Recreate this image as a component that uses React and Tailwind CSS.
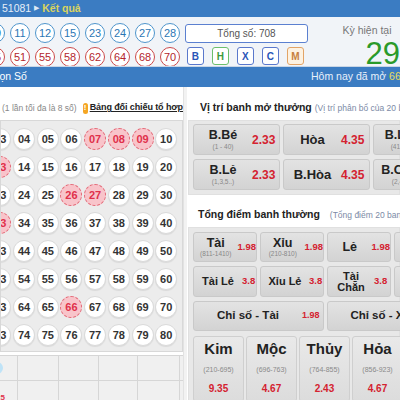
import React from 'react';

const FONT = "font-['Liberation_Sans',Arial,sans-serif]";

const topBalls = ['09', '11', '12', '15', '23', '24', '27', '28'];
const botBalls = ['45', '51', '55', '58', '62', '64', '68', '70'];
const picked = [7, 8, 9, 13, 26, 27, 33, 66];

const Ball = ({ n, tone }) => (
  <div className={`w-[20px] h-[20px] shrink-0 rounded-full bg-white border-[1.5px] flex items-center justify-center text-[11px] ${tone === 'blue' ? 'border-[#4f95cc] text-[#2b77b5]' : 'border-[#cc4a4a] text-[#b3262c]'}`}>
    {n}
  </div>
);

const TagBtn = ({ children, cls }) => (
  <div className={`w-[17px] h-[18px] rounded-[3px] border flex items-center justify-center text-[10px] font-bold ${cls}`}>{children}</div>
);

const GridBall = ({ n }) => {
  const on = picked.includes(n);
  return (
    <div className={`w-[22px] h-[22px] rounded-full flex items-center justify-center text-[11px] font-bold ${on ? 'bg-[#f8c4ca] border border-dashed border-[#e46a78] text-[#e0304a]' : 'bg-white border border-[#dadada] text-[#333] shadow-[0_1px_1px_rgba(0,0,0,0.08)]'}`}>
      {String(n).padStart(2, '0')}
    </div>
  );
};

const Odd = ({ children, cls = 'text-[9px]' }) => (
  <span className={`font-bold text-[#d42230] ${cls}`}>{children}</span>
);

const btn = 'rounded-[3px] border border-[#c9c9c9] bg-linear-to-b from-[#e3e3e3] to-[#d3d3d3] shrink-0 flex items-center';

export default function App() {
  const rows = [];
  for (let r = 0; r < 8; r++) {
    const row = [];
    for (let c = 1; c <= 10; c++) row.push(r * 10 + c);
    rows.push(row);
  }

  return (
    <div className={`w-[400px] h-[400px] overflow-hidden bg-white ${FONT}`}>
      {/* top bar */}
      <div className="h-[17px] bg-[#3b7cc2] flex items-center pl-[2px] text-[10.5px] whitespace-nowrap">
        <span className="text-[#e6eef8]">51081</span>
        <span className="text-[#dfe9f5] text-[7px] mx-[3px]">▶</span>
        <span className="text-[#d9d35e] font-bold">Kết quả</span>
      </div>

      {/* results */}
      <div className="h-[50px] bg-[#f1f4f8] flex border-b border-[#c9d6e6]">
        <div className="w-[188px] overflow-hidden flex flex-col gap-[4px] pt-[6px]">
          <div className="flex gap-[5px] ml-[-15px]">
            {topBalls.map((n) => <Ball key={n} n={n} tone="blue" />)}
          </div>
          <div className="flex gap-[5px] ml-[-15px]">
            {botBalls.map((n) => <Ball key={n} n={n} tone="red" />)}
          </div>
        </div>
        <div className="w-[130px] pl-[2px] pt-[7px] flex flex-col gap-[4px]">
          <div className="w-[123px] h-[19px] rounded-[3px] border border-[#5b80d0] bg-white flex items-center justify-center text-[10px] text-[#555]">
            Tổng số: 708
          </div>
          <div className="flex gap-[8px] pl-[2px]">
            <TagBtn cls="border-[#5a78cc] text-[#2a55b8] bg-white">B</TagBtn>
            <TagBtn cls="border-[#6cbf6c] text-[#3d9a3d] bg-white">H</TagBtn>
            <TagBtn cls="border-[#5a78cc] text-[#2a55b8] bg-white">X</TagBtn>
            <TagBtn cls="border-[#5a78cc] text-[#2a55b8] bg-white">C</TagBtn>
            <TagBtn cls="border-[#e2a467] text-[#c7803e] bg-[#fdf2e2]">M</TagBtn>
          </div>
        </div>
        <div className="flex-1 whitespace-nowrap">
          <div className="pl-[33px] pt-[6px] text-[10.5px] text-[#777]">Kỳ hiện tại</div>
          <div className="pl-[56px] mt-[0px] text-[31px] leading-[30px] text-[#2a9a2a]">29</div>
        </div>
      </div>

      {/* blue bar */}
      <div className="h-[20px] bg-[#3b7cc2] flex items-center text-[10.5px] text-white whitespace-nowrap overflow-hidden">
        <div className="w-[311px] shrink-0 overflow-hidden">
          <span className="ml-[-14px] inline-block">Chọn Số</span>
        </div>
        <span className="text-[#e8f0fa]">Hôm nay đã mở <span className="text-[#e8dc5a]">66</span> kỳ</span>
      </div>

      {/* main */}
      <div className="flex">
        {/* left */}
        <div className="w-[183px] shrink-0 overflow-hidden">
          <div className="h-[33px] pt-[9px] flex items-center whitespace-nowrap pl-[2px]">
            <span className="text-[8.5px] text-[#888]">(1 lần tối đa là 8 số)</span>
            <span className="ml-[6px] w-[11px] h-[11px] rounded-full bg-[#f5a623] text-white text-[8px] font-bold flex items-center justify-center">!</span>
            <span className="ml-[2px] text-[9px] text-[#222] underline font-semibold tracking-[-0.1px]">Bảng đối chiếu tổ hợp</span>
          </div>
          <div className="h-[232px] bg-[#ececec] border border-[#d8d8d8] overflow-hidden pt-[7px]">
            <div className="ml-[-59px] flex flex-col gap-y-[6px]">
              {rows.map((row, i) => (
                <div key={i} className="flex gap-x-[1.7px]">
                  {row.map((n) => <GridBall key={n} n={n} />)}
                </div>
              ))}
            </div>
          </div>
          <div className="mt-[3px] bg-[#f0f0f0] border-t border-[#d6d6d6]">
            {[0, 1].map((r) => (
              <div key={r} className="flex h-[25px] border-b border-[#d6d6d6]">
                <div className="w-[18px] border-r border-[#d6d6d6] overflow-hidden flex items-center">
                  {r === 0 ? (
                    <span className="ml-[-9px] w-[12px] h-[12px] rounded-full bg-[#bfe3f7]" />
                  ) : (
                    <span className="ml-[-4px] mt-[10px] text-[8px] font-bold text-[#e0304a]">25</span>
                  )}
                </div>
                <div className="w-[41px] border-r border-[#d6d6d6]" />
                <div className="w-[40px] border-r border-[#d6d6d6]" />
                <div className="w-[39px] border-r border-[#d6d6d6]" />
                <div className="w-[42px] border-r border-[#d6d6d6]" />
              </div>
            ))}
          </div>
        </div>

        <div className="w-[4px] shrink-0 bg-[#f2f2f2] border-l border-[#e2e2e2]" />

        {/* right */}
        <div className="flex-1 overflow-hidden">
          <div className="h-[33px] pt-[9px] pl-[13px] flex items-center whitespace-nowrap">
            <span className="text-[10.5px] font-bold text-[#222]">Vị trí banh mở thưởng</span>
            <span className="ml-[3px] text-[8.5px] text-[#7b8aa6]">(Vị trí phân bổ của 20 banh)</span>
          </div>
          <div className="h-[75px] ml-[1px] bg-[#e8e8e8] border border-[#e0e0e0] pl-[4px] pt-[3px] flex flex-col gap-[4px]">
            <div className="flex gap-[3px]">
              <div className={`${btn} w-[87px] h-[31px]`}>
                <div className="w-[58px] flex flex-col items-center leading-none">
                  <span className="text-[12.5px] font-bold text-[#222]">B.Bé</span>
                  <span className="text-[6.5px] text-[#888] mt-[2px]">(1 - 40)</span>
                </div>
                <Odd cls="text-[12px]">2.33</Odd>
              </div>
              <div className={`${btn} w-[87px] h-[31px]`}>
                <div className="w-[57px] flex flex-col items-center leading-none">
                  <span className="text-[13px] font-bold text-[#222]">Hòa</span>
                </div>
                <Odd cls="text-[12px]">4.35</Odd>
              </div>
              <div className={`${btn} w-[87px] h-[31px]`}>
                <div className="w-[58px] flex flex-col items-center leading-none">
                  <span className="text-[12.5px] font-bold text-[#222]">B.Lớn</span>
                  <span className="text-[6.5px] text-[#888] mt-[2px]">(41 - 80)</span>
                </div>
                <Odd cls="text-[12px]">2.33</Odd>
              </div>
            </div>
            <div className="flex gap-[3px]">
              <div className={`${btn} w-[87px] h-[31px]`}>
                <div className="w-[58px] flex flex-col items-center leading-none">
                  <span className="text-[12.5px] font-bold text-[#222]">B.Lẻ</span>
                  <span className="text-[6.5px] text-[#888] mt-[2px]">(1,3,5..)</span>
                </div>
                <Odd cls="text-[12px]">2.33</Odd>
              </div>
              <div className={`${btn} w-[87px] h-[31px]`}>
                <div className="w-[57px] flex flex-col items-center leading-none">
                  <span className="text-[13px] font-bold text-[#222]">B.Hòa</span>
                </div>
                <Odd cls="text-[12px]">4.35</Odd>
              </div>
              <div className={`${btn} w-[87px] h-[31px]`}>
                <div className="w-[58px] flex flex-col items-center leading-none">
                  <span className="text-[12.5px] font-bold text-[#222]">B.Chẵn</span>
                  <span className="text-[6.5px] text-[#888] mt-[2px]">(2,4,6..)</span>
                </div>
                <Odd cls="text-[12px]">2.33</Odd>
              </div>
            </div>
          </div>

          <div className="h-[32px] pt-[8px] pl-[11px] flex items-center whitespace-nowrap">
            <span className="text-[10.5px] font-bold text-[#222]">Tổng điểm banh thường</span>
            <span className="ml-[10px] text-[8.5px] text-[#7b8aa6]">(Tổng điểm 20 banh)</span>
          </div>

          <div className="ml-[1px] bg-[#e8e8e8] border border-[#e0e0e0] pl-[4px] pt-[4px] flex flex-col gap-[4px] h-[200px]">
            <div className="flex gap-[3px]">
              {[['Tài', '(811-1410)'], ['Xỉu', '(210-810)'], ['Lẻ', ''], ['Chẵn', '']].map(([l, s]) => (
                <div key={l} className={`${btn} w-[64px] h-[30px]`}>
                  <div className="w-[44px] flex flex-col items-center leading-none">
                    <span className="text-[12.5px] font-bold text-[#222]">{l}</span>
                    {s && <span className="text-[6.5px] text-[#888] mt-[2px]">{s}</span>}
                  </div>
                  <Odd cls="text-[9.5px]">1.98</Odd>
                </div>
              ))}
            </div>
            <div className="flex gap-[3px]">
              {['Tài Lẻ', 'Xỉu Lẻ', 'Tài Chẵn', 'Xỉu Chẵn'].map((l, i) => (
                <div key={l} className={`${btn} w-[64px] h-[31px]`}>
                  <div className={`${i >= 2 ? 'w-[46px] px-[6px]' : 'w-[48px]'} text-center leading-[11px] text-[11px] font-bold text-[#222]`}>{l}</div>
                  <Odd cls="text-[9.5px]">3.8</Odd>
                </div>
              ))}
            </div>
            <div className="flex gap-[3px]">
              {['Chỉ số - Tài', 'Chỉ số - Xỉu'].map((l) => (
                <div key={l} className={`${btn} w-[131px] h-[30px]`}>
                  <div className="w-[108px] text-center text-[11.5px] font-bold text-[#222]">{l}</div>
                  <Odd>1.98</Odd>
                </div>
              ))}
            </div>
            <div className="flex gap-[2px] mt-[1px]">
              {[['Kim', '(210-695)', '9.35'], ['Mộc', '(696-763)', '4.67'], ['Thủy', '(764-855)', '2.43'], ['Hỏa', '(856-923)', '4.67'], ['Thổ', '(924-1410)', '9.35']].map(([l, s, o]) => (
                <div key={l} className="w-[51px] h-[66px] shrink-0 rounded-[3px] border border-[#cfcfcf] bg-linear-to-b from-[#e9e9e9] to-[#dcdcdc] flex flex-col items-center pt-[4px] leading-none">
                  <span className="text-[15px] font-bold text-[#222]">{l}</span>
                  <span className="text-[7px] text-[#8a8a8a] mt-[10px]">{s}</span>
                  <span className="text-[10px] font-bold text-[#d42230] mt-[11px]">{o}</span>
                </div>
              ))}
            </div>
          </div>
        </div>
      </div>
    </div>
  );
}
